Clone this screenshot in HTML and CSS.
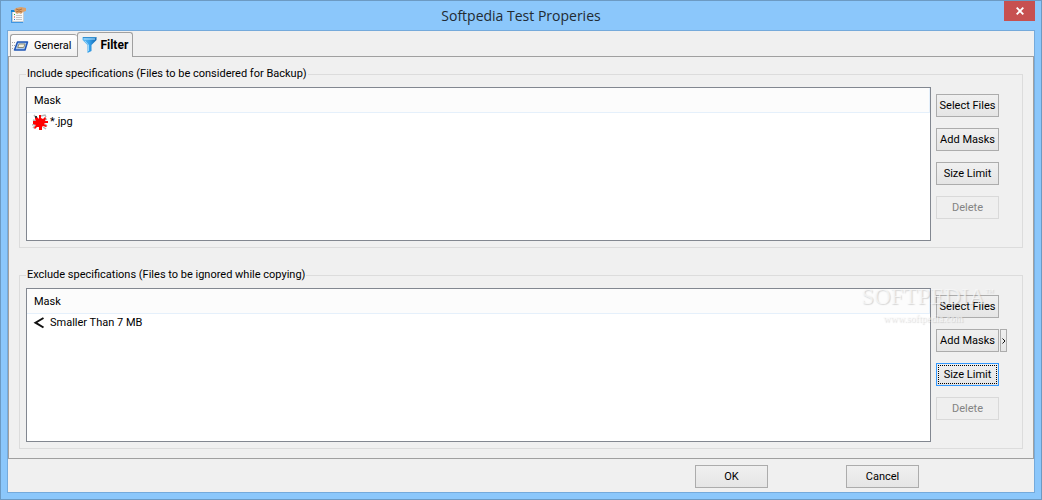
FILE: index.html
```html
<!DOCTYPE html>
<html lang="en">
<head>
<meta charset="utf-8">
<title>Softpedia Test Properies</title>
<link rel="stylesheet" href="styles.css">
</head>
<body>
<div class="window">
  <header class="titlebar">
    <svg class="app-icon" width="16" height="16" viewBox="0 0 16 16">
      <path d="M1 4h2v11h10v1H1z" fill="#3f97e4"/>
      <path d="M2.500 4.500h11v10h-11z" fill="#f6f8fa" stroke="#c3cdd5"/>
      <path d="M1 3h4l1 2H1z" fill="#1684d8"/>
      <path d="M4 3l2-2 5-1 5 1v3l-3 1-2 2-2-1-2 1-2-2z" fill="#dba26c"/>
      <path d="M6 2l3 1 3-1M6 5l3-1 3 1" fill="none" stroke="#b0713f"/>
      <path d="M4 7.500h1" stroke="#31a541"/><path d="M4 10h1" stroke="#d33"/><path d="M4 12.500h1" stroke="#357fd0"/>
      <path d="M6 8.500h6M6 10.500h6M6 12.500h6" stroke="#c4c4c4"/>
    </svg>
    <h1 class="title">Softpedia Test Properies</h1>
    <button class="close" type="button" aria-label="Close">
      <svg width="8" height="8" viewBox="0 0 8 8"><path d="M.7.700l6.600 6.600M7.300.700L.7 7.300" stroke="#fff" stroke-width="1.900"/></svg>
    </button>
  </header>
  <main class="client">
    <div class="tabs" role="tablist">
      <button class="tab" type="button" role="tab" aria-selected="false">
        <svg width="17" height="14" viewBox="0 0 17 14">
          <path d="M0 3.500h4M0 6.500h3M0 9.500h2" stroke="#a8a8a8" stroke-dasharray="1 1"/>
          <path d="M5.500 3h10l-2.500 8H2.500z" fill="#a9c7ee" stroke="#1f55b5" stroke-width="1.500" stroke-linejoin="round"/>
          <path d="M7 5h6l-1.300 3.500H5.700z" fill="#f3f0df" stroke="#8b8b79"/>
        </svg>General</button>
      <button class="tab active" type="button" role="tab" aria-selected="true">
        <svg width="15" height="16" viewBox="0 0 15 16">
          <defs><linearGradient id="funnel"><stop offset="0" stop-color="#67bef5"/><stop offset=".5" stop-color="#35a0ea"/><stop offset="1" stop-color="#1265ae"/></linearGradient></defs>
          <path d="M.5 0h14v3L9.500 8v6L5.500 16V8L.5 3z" fill="url(#funnel)"/>
          <path d="M1 .500h13" stroke="#338fd0"/><path d="M2 2h11" stroke="#b4e2fc"/>
          <path d="M3 4l3.500 4v6" fill="none" stroke="#98d7fb"/>
        </svg>Filter</button>
    </div>
    <section class="panel" role="tabpanel">
      <fieldset class="group">
        <legend>Include specifications (Files to be considered for Backup)</legend>
        <div class="list">
          <table>
            <thead><tr><th>Mask</th></tr></thead>
            <tbody><tr><td><span class="item">
              <svg width="16" height="16" viewBox="0 0 16 16">
                <path d="M2 1l3 4M9 2l4-1 1 2M15 5l-3 1M1 6l3 1M0 11l3-1M1 14l3-3M11 13l3 2M13 10l2 2" fill="none" stroke="#b5b5b5" stroke-width="1.500"/>
                <path d="M3 3h2l2 2V1h2v3l2 1 2-2 1 1-1 3h3v2h-3l-1 1 3 2-1 1-3-1-1 1v3H7v-3H5l-2 2-1-1 2-3-3-1V7h3L3 5z" fill="#f00"/>
                <path d="M3 2h2v2H3z" fill="#333"/>
              </svg>*.jpg</span></td></tr></tbody>
          </table>
        </div>
        <div class="actions">
          <div class="row"><button class="btn" type="button">Select Files</button></div>
          <div class="row"><button class="btn" type="button">Add Masks</button></div>
          <div class="row"><button class="btn" type="button">Size Limit</button></div>
          <div class="row"><button class="btn" type="button" disabled>Delete</button></div>
        </div>
      </fieldset>
      <fieldset class="group">
        <legend>Exclude specifications (Files to be ignored while copying)</legend>
        <div class="list">
          <table>
            <thead><tr><th>Mask</th></tr></thead>
            <tbody><tr><td><span class="item">
              <svg width="16" height="16" viewBox="0 0 16 16"><path d="M11.500 3L3.500 7.700l8 4.800" fill="none" stroke="#111" stroke-width="2"/></svg>Smaller Than 7 MB</span></td></tr></tbody>
          </table>
        </div>
        <div class="actions">
          <div class="row"><button class="btn" type="button">Select Files</button></div>
          <div class="row"><button class="btn" type="button">Add Masks</button><button class="btn more" type="button" aria-label="More masks"><svg width="4" height="6" viewBox="0 0 4 6"><path d="M.5.500L3 3 .5 5.500" fill="none" stroke="#111"/></svg></button></div>
          <div class="row"><button class="btn focused" type="button"><span class="focus-ring">Size Limit</span></button></div>
          <div class="row"><button class="btn" type="button" disabled>Delete</button></div>
        </div>
        <div class="watermark"><span class="brand">SOFTPEDIA<sup>™</sup></span><span class="site">www.softpedia.com</span></div>
      </fieldset>
    </section>
    <footer class="footer">
      <button class="btn wide" type="button">OK</button>
      <button class="btn wide" type="button">Cancel</button>
    </footer>
  </main>
</div>
</body>
</html>
```
FILE: styles.css
```css
* { box-sizing: border-box; }

body {
  margin: 0;
  font: 11px/14px Roboto, "Liberation Sans", sans-serif;
  color: #000;
}

button { font: inherit; color: inherit; padding: 0; }
svg { display: block; flex: none; }

.window {
  display: flex;
  flex-direction: column;
  min-height: 100vh;
  padding: 0 6px 6px;
  border: 1px solid #6c9ac3;
  background: #8bc7fb;
}

.titlebar {
  display: grid;
  grid-template-columns: 46px 1fr 46px;
  align-items: start;
  height: 29px;
}

.app-icon { margin: 6px 0 0 3px; }

.title {
  margin: 5px 0 0;
  font: 14px/20px "Open Sans", "Noto Sans", sans-serif;
  text-align: center;
  color: #222b33;
}

.close {
  display: grid;
  place-items: center;
  width: 31px;
  height: 20px;
  margin-left: 15px;
  border: 0;
  background: #c75050;
}

.client {
  flex: 1;
  display: flex;
  flex-direction: column;
  border: 1px solid #75aadb;
  background: #f0f0f0;
}

.tabs {
  display: flex;
  align-items: flex-end;
  height: 26px;
  padding: 0 2px;
  position: relative;
  margin-bottom: -1px;
}

.tab {
  display: flex;
  align-items: center;
  gap: 5px;
  height: 23px;
  padding: 0 6px 0 1px;
  border: 1px solid #a0a0a0;
  border-right: 0;
  border-radius: 3px 3px 0 0;
  background: linear-gradient(#fff, #f0f0f0);
}

.tab.active {
  height: 25px;
  padding: 0 4px 1px;
  gap: 3px;
  border-right: 1px solid #a0a0a0;
  border-bottom: 0;
  background: #f0f0f0;
  font-size: 12px;
  font-weight: bold;
}

.panel {
  flex: 1;
  display: flex;
  flex-direction: column;
  gap: 20px;
  padding: 10px 10px 9px;
  border: 1px solid #a0a0a0;
}

.group {
  flex: 1;
  display: flex;
  gap: 5px;
  min-width: 0;
  margin: 0;
  padding: 6px 15px 6px 6px;
  border: 1px solid #dcdcdc;
  position: relative;
}

.group legend { padding: 0 1px; }

.list {
  flex: 1;
  min-height: 154px;
  border: 1px solid #828790;
  background: #fff;
}

.list table { width: 100%; border-collapse: collapse; }

.list th {
  height: 24px;
  padding: 2px 7px 0;
  border: solid #e5f0fb;
  border-width: 0 1px 1px 0;
  background: #fcfcfc;
  text-align: left;
  font-weight: normal;
}

.list td { height: 20px; padding: 0 5px; }
.item { display: flex; align-items: center; gap: 2px; }

.actions {
  display: flex;
  flex-direction: column;
  gap: 11px;
  width: 71px;
  padding-top: 7px;
}

.row { display: flex; gap: 1px; }

.btn {
  width: 63px;
  height: 23px;
  border: 1px solid #acacac;
  background: linear-gradient(#f0f0f0, #e5e5e5);
  white-space: nowrap;
}

.btn:disabled { border-color: #d9d9d9; background: #efefef; color: #838383; }
.btn.more { display: grid; place-items: center; width: 7px; }
.btn.wide { width: 73px; }
.btn.focused { border-color: #3399ff; padding: 1px; }
.focus-ring { display: grid; place-items: center; height: 100%; border: 1px dotted #000; }

.footer {
  display: flex;
  justify-content: flex-end;
  gap: 78px;
  padding: 6px 115px 4px;
}

.watermark {
  position: absolute;
  top: 3px;
  right: 28px;
  display: flex;
  flex-direction: column;
  font-family: "Liberation Serif", serif;
  color: rgba(250, 250, 250, .7);
  text-shadow: 1px 1px 1px rgba(130, 130, 130, .3);
  pointer-events: none;
}

.brand { font-size: 23px; line-height: 24px; }
.brand sup { font-size: 9px; line-height: 9px; vertical-align: 9px; }
.site { padding-left: 22px; font-size: 10px; line-height: 20px; }
```
